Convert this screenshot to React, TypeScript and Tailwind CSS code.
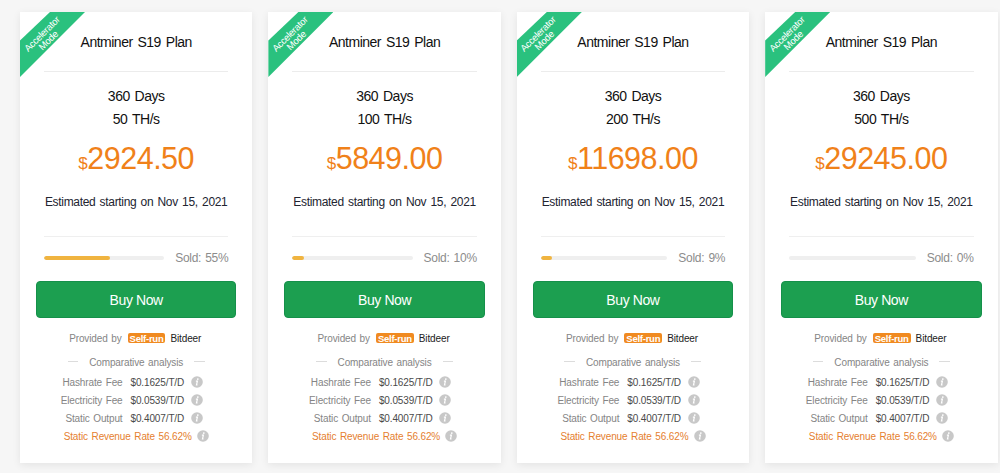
import React from 'react';

interface Plan {
    hashrate: number;
    price: string;
    sold: number;
}

const plans: Plan[] = [
    { hashrate: 50, price: '2924.50', sold: 55 },
    { hashrate: 100, price: '5849.00', sold: 10 },
    { hashrate: 200, price: '11698.00', sold: 9 },
    { hashrate: 500, price: '29245.00', sold: 0 },
];

const fees = [
    { label: 'Hashrate Fee', value: '$0.1625/T/D' },
    { label: 'Electricity Fee', value: '$0.0539/T/D' },
    { label: 'Static Output', value: '$0.4007/T/D' },
];

const InfoIcon: React.FC = () => (
    <svg className="w-3 h-3 mb-[2px] shrink-0" viewBox="0 0 12 12">
        <circle cx="6" cy="6" r="5.8" fill="#c8c8c8" />
        <circle cx="6.8" cy="3.1" r="0.9" fill="#fff" />
        <path d="M4.9 5.2h1.5L5.5 8.9h1" fill="none" stroke="#fff" strokeWidth="1.2" />
    </svg>
);

const PlanCard: React.FC<{ plan: Plan }> = ({ plan }) => (
    <div className="relative w-[232.4px] h-[450.5px] shrink-0 bg-white shadow-[0_2px_8px_rgba(0,0,0,0.08)] flex flex-col">
        {/* Corner ribbon */}
        <div className="absolute top-0 left-0 w-[65px] h-[65px] bg-[#2ac17e] [clip-path:polygon(30px_0,65px_0,0_65px,0_28.5px)]">
            <div className="absolute top-[15.5px] -left-[5.5px] w-[60px] -rotate-45 text-center text-[9.5px] leading-[9px] tracking-[-0.25px] text-white">
                Accelerator<br />Mode
            </div>
        </div>

        <div className="flex flex-col px-6 text-center">
            <h3 className="h-[60px] pt-[2px] border-b border-[#ececec] text-[14px] leading-[56px] tracking-[-0.5px] [word-spacing:1.5px] text-[#111]">
                Antminer S19 Plan
            </h3>
            <div className="mt-[13px] text-[14px] leading-[23px] tracking-[-0.5px] [word-spacing:1.5px] text-[#111]">
                <p>360 Days</p>
                <p>{plan.hashrate} TH/s</p>
            </div>
            <p className="mt-[12px] h-[30px] text-[30.5px] leading-[30px] tracking-[-0.5px] text-[#f08119]">
                <span className="text-[17px] leading-none">$</span>{plan.price}
            </p>
            <p className="mt-[19px] h-[44.5px] border-b border-[#efefef] text-[12px] leading-[20px] tracking-[-0.32px] [word-spacing:1.2px] whitespace-nowrap text-[#222430]">
                Estimated starting on Nov 15, 2021
            </p>
            <div className="mt-[10.5px] h-[22px] flex items-center gap-[11px]">
                <div className="flex-1 h-[3.5px] rounded-full bg-[#efefef] overflow-hidden">
                    <div className="h-full rounded-full bg-[#f0b440]" style={{ width: `${plan.sold}%` }} />
                </div>
                <span className="text-[12px] tracking-[-0.28px] [word-spacing:1px] text-[#8c8c8c]">Sold: {plan.sold}%</span>
            </div>
        </div>

        <button className="mt-3 mx-4 h-[37px] pt-px rounded border border-[#15904a] bg-[#1c9f50] text-[14px] tracking-[-0.4px] text-white">
            Buy Now
        </button>

        <div className="text-[10px] tracking-[-0.13px] [word-spacing:1px] text-[#858585]">
            <div className="mt-[13px] h-[15px] pr-[2px] flex items-center justify-center">
                <span>Provided by</span>
                <span className="ml-1.5 mr-[5px] mb-px h-[10.5px] px-[2px] rounded-[2px] bg-[#f08a20] text-[9.5px] leading-[11px] tracking-[-0.25px] font-bold text-white">Self-run</span>
                <span className="text-[#222]">Bitdeer</span>
            </div>
            <div className="mt-[8px] h-[16px] flex items-center justify-center gap-[11px]">
                <i className="w-[10.5px] h-px mb-[2px] bg-[#dcdcdc]" />
                <span>Comparative analysis</span>
                <i className="w-[10.5px] h-px mb-[2px] bg-[#dcdcdc]" />
            </div>
            <div className="mt-[3.5px]">
                {fees.map((fee) => (
                    <div key={fee.label} className="h-[18px] flex items-center">
                        <span className="w-[102.5px] text-right">{fee.label}</span>
                        <span className="ml-[8px] w-[53.5px] text-[#4a4a4a]">{fee.value}</span>
                        <span className="ml-[7px]"><InfoIcon /></span>
                    </div>
                ))}
                <div className="h-[18px] flex items-center justify-center gap-[5px] text-[#e5802f]">
                    <span>Static Revenue Rate 56.62%</span>
                    <InfoIcon />
                </div>
            </div>
        </div>
    </div>
);

const App: React.FC = () => (
    <div className="h-[473px] w-[1000px] overflow-hidden bg-[#f6f6f6] pt-3 pl-5 flex items-start gap-4 font-['Liberation_Sans',Arial,sans-serif]">
        {plans.map((plan) => (
            <PlanCard key={plan.hashrate} plan={plan} />
        ))}
    </div>
);

export default App;
